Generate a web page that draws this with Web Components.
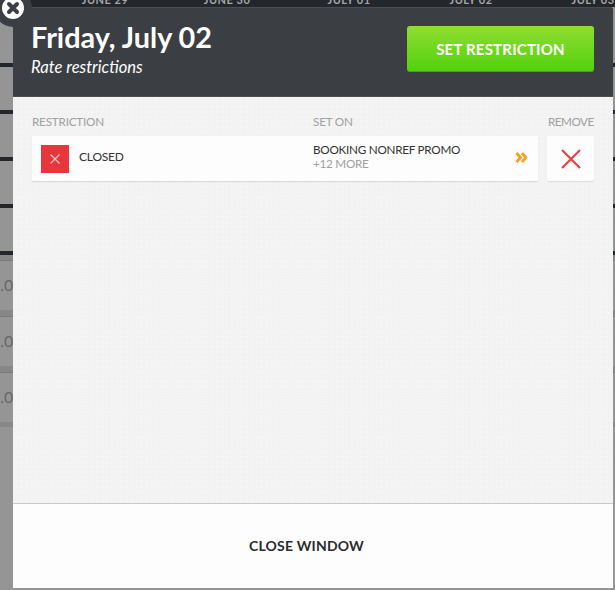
<!DOCTYPE html>
<html>
<head>
<meta charset="utf-8">
<title>Rate restrictions</title>
<style>
  html, body { margin: 0; padding: 0; height: 100%; overflow: hidden; }
  body { position: relative; width: 615px; height: 590px; background: #959595; font-family: Lato, "Open Sans", sans-serif; }
</style>
</head>
<body>
<calendar-backdrop></calendar-backdrop>
<rate-modal>
  <modal-header slot="header" title-text="Friday, July 02" subtitle="Rate restrictions" action="SET RESTRICTION"></modal-header>
  <restriction-table>
    <restriction-row name="CLOSED" set-on="BOOKING NONREF PROMO" more="+12 MORE"></restriction-row>
  </restriction-table>
</rate-modal>

<script>
class CalendarBackdrop extends HTMLElement {
  constructor() {
    super();
    this.attachShadow({ mode: "open" });
    this.shadowRoot.innerHTML = `
      <style>
        :host { display: block; height: 590px; overflow: hidden; background: #959595; }
        .dates {
          display: grid;
          grid-template-columns: repeat(5, 122px);
          height: 7px;
          padding-left: 44px;
          overflow: hidden;
          background: #23262a;
          color: #a4a6a8;
          font: bold 11px/1 Lato, sans-serif;
          letter-spacing: 0.5px;
          text-align: center;
        }
        .dates span { margin-top: -6px; }
        .bar { height: 4px; background: #23262a; }
        .gap56 { height: 56px; }
        .gap43 { height: 43px; }
        .cell {
          height: 50px;
          border-top: 1px solid #7a7a7a;
          box-sizing: border-box;
          color: #666;
          font: 16px/48px Lato, sans-serif;
          text-indent: -9px;
        }
        .band { height: 6px; background: #878787; }
        .band.first { height: 5px; }
      </style>
      <div class="dates"><span>JUNE 29</span><span>JUNE 30</span><span>JULY 01</span><span>JULY 02</span><span>JULY 03</span></div>
      <div class="gap56"></div><div class="bar"></div>
      <div class="gap43"></div><div class="bar"></div>
      <div class="gap43"></div><div class="bar"></div>
      <div class="gap43"></div><div class="bar"></div>
      <div class="gap43"></div><div class="bar"></div>
      <div class="band first"></div>
      <div class="cell">1.00</div><div class="band"></div>
      <div class="cell">1.00</div><div class="band"></div>
      <div class="cell">1.00</div><div class="band first"></div>
    `;
  }
}

class RateModal extends HTMLElement {
  constructor() {
    super();
    this.attachShadow({ mode: "open" });
    this.shadowRoot.innerHTML = `
      <style>
        :host {
          position: absolute;
          left: 13px;
          top: 7px;
          width: 600px;
          height: 581px;
          display: flex;
          flex-direction: column;
          font-family: Lato, sans-serif;
        }
        .body {
          flex: 1;
          min-height: 0;
          background-color: #f3f3f3;
          background-image:
            radial-gradient(#f0f0f0 1px, transparent 1px),
            radial-gradient(#f6f6f6 1px, transparent 1px);
          background-size: 3px 3px, 5px 5px;
          background-position: 0 0, 1px 2px;
        }
        .foot {
          height: 85px;
          box-sizing: border-box;
          border-top: 1px solid #c9c9c9;
          padding: 0 13px 2px 0;
          background: #fdfdfd;
          display: flex;
          align-items: center;
          justify-content: center;
          color: #2b2b2b;
          font-size: 14px;
          font-weight: 700;
          letter-spacing: 0.2px;
        }
        .close {
          position: absolute;
          left: -19px;
          top: -18px;
          width: 22px;
          height: 22px;
          border: 8px solid #3b3e43;
          border-radius: 50%;
          background: #fff;
          display: flex;
          align-items: center;
          justify-content: center;
          box-sizing: content-box;
        }
      </style>
      <slot name="header"></slot>
      <div class="body"><slot></slot></div>
      <div class="foot">CLOSE WINDOW</div>
      <div class="close">
        <svg width="14" height="14" viewBox="0 0 14 14"><path d="M3 3 L11 11 M11 3 L3 11" stroke="#3b3e43" stroke-width="4" stroke-linecap="round"/></svg>
      </div>
    `;
  }
}

class ModalHeader extends HTMLElement {
  constructor() {
    super();
    this.attachShadow({ mode: "open" });
    this.shadowRoot.innerHTML = `
      <style>
        :host {
          display: flex;
          align-items: flex-start;
          justify-content: space-between;
          height: 90px;
          box-sizing: border-box;
          padding: 0 19px;
          background: #3b3e43;
          border-top: 1px solid #4a4d51;
          border-bottom: 1px solid #4a4d51;
          border-radius: 2px 2px 0 0;
          color: #fff;
        }
        .text { margin: 13px 0 0 -1px; }
        h1 { margin: 0; font-size: 28.8px; line-height: 32px; font-weight: 700; }
        p { margin: 4px 0 0; font-size: 16.6px; line-height: 20px; font-style: italic; }
        button {
          margin-top: 18px;
          width: 187px;
          height: 46px;
          padding: 0;
          border: 0;
          border-radius: 3px;
          background: linear-gradient(#91dd30, #50d20c);
          box-shadow: inset 0 -1px 0 rgba(60, 130, 10, 0.5);
          color: #fff;
          font: 700 15px Lato, sans-serif;
          letter-spacing: 0.2px;
        }
      </style>
      <div class="text">
        <h1></h1>
        <p></p>
      </div>
      <button></button>
    `;
  }

  connectedCallback() {
    this.shadowRoot.querySelector("h1").textContent = this.getAttribute("title-text");
    this.shadowRoot.querySelector("p").textContent = this.getAttribute("subtitle");
    this.shadowRoot.querySelector("button").textContent = this.getAttribute("action");
  }
}

class RestrictionTable extends HTMLElement {
  constructor() {
    super();
    this.attachShadow({ mode: "open" });
    this.shadowRoot.innerHTML = `
      <style>
        :host { display: block; padding: 16px 19px 0; }
        .labels {
          display: grid;
          grid-template-columns: 281px 234px 47px;
          height: 23px;
          color: #a0a0a0;
          font-size: 11.7px;
          letter-spacing: -0.2px;
          line-height: 16px;
        }
        .labels span:last-child { padding-left: 1px; white-space: nowrap; letter-spacing: -0.5px; }
      </style>
      <div class="labels"><span>RESTRICTION</span><span>SET ON</span><span>REMOVE</span></div>
      <slot></slot>
    `;
  }
}

class RestrictionRow extends HTMLElement {
  constructor() {
    super();
    this.attachShadow({ mode: "open" });
    this.shadowRoot.innerHTML = `
      <style>
        :host { display: grid; grid-template-columns: 506px 47px; column-gap: 9px; height: 45px; }
        .main, .remove {
          background: #fdfdfd;
          box-shadow: 0 1px 1px rgba(0, 0, 0, 0.1);
        }
        .main { display: grid; grid-template-columns: 281px 1fr auto; align-items: center; }
        .name { display: flex; align-items: center; gap: 10px; padding-left: 9px; color: #333; font-size: 12px; letter-spacing: -0.2px; }
        .label { padding-bottom: 4px; }
        .flag {
          width: 28px;
          height: 28px;
          background: #e8363c;
          display: flex;
          align-items: center;
          justify-content: center;
        }
        .set-on { color: #333; font-size: 11.7px; letter-spacing: -0.25px; line-height: 14px; padding-bottom: 5px; }
        .more { color: #a0a0a0; }
        .arrows { padding: 0 11px 2px 0; display: flex; }
        .remove { display: flex; align-items: center; justify-content: center; border-radius: 2px; }
      </style>
      <div class="main">
        <div class="name">
          <span class="flag"><svg width="10" height="10" viewBox="0 0 10 10"><path d="M0.5 0.5 L9.5 9.5 M9.5 0.5 L0.5 9.5" stroke="#f7c9cb" stroke-width="1.2"/></svg></span>
          <span class="label"></span>
        </div>
        <div class="set-on"><div class="target"></div><div class="more"></div></div>
        <span class="arrows"><svg width="12" height="11" viewBox="0 0 12 11"><path d="M1.5 1 L5.5 5.5 L1.5 10 M7 1 L11 5.5 L7 10" fill="none" stroke="#f9a01f" stroke-width="2.8"/></svg></span>
      </div>
      <div class="remove"><svg width="20" height="20" viewBox="0 0 20 20"><path d="M1 1 L19 19 M19 1 L1 19" stroke="#e94045" stroke-width="2.2"/></svg></div>
    `;
  }

  connectedCallback() {
    this.shadowRoot.querySelector(".label").textContent = this.getAttribute("name");
    this.shadowRoot.querySelector(".target").textContent = this.getAttribute("set-on");
    this.shadowRoot.querySelector(".more").textContent = this.getAttribute("more");
  }
}

customElements.define("calendar-backdrop", CalendarBackdrop);
customElements.define("rate-modal", RateModal);
customElements.define("modal-header", ModalHeader);
customElements.define("restriction-table", RestrictionTable);
customElements.define("restriction-row", RestrictionRow);
</script>
</body>
</html>
